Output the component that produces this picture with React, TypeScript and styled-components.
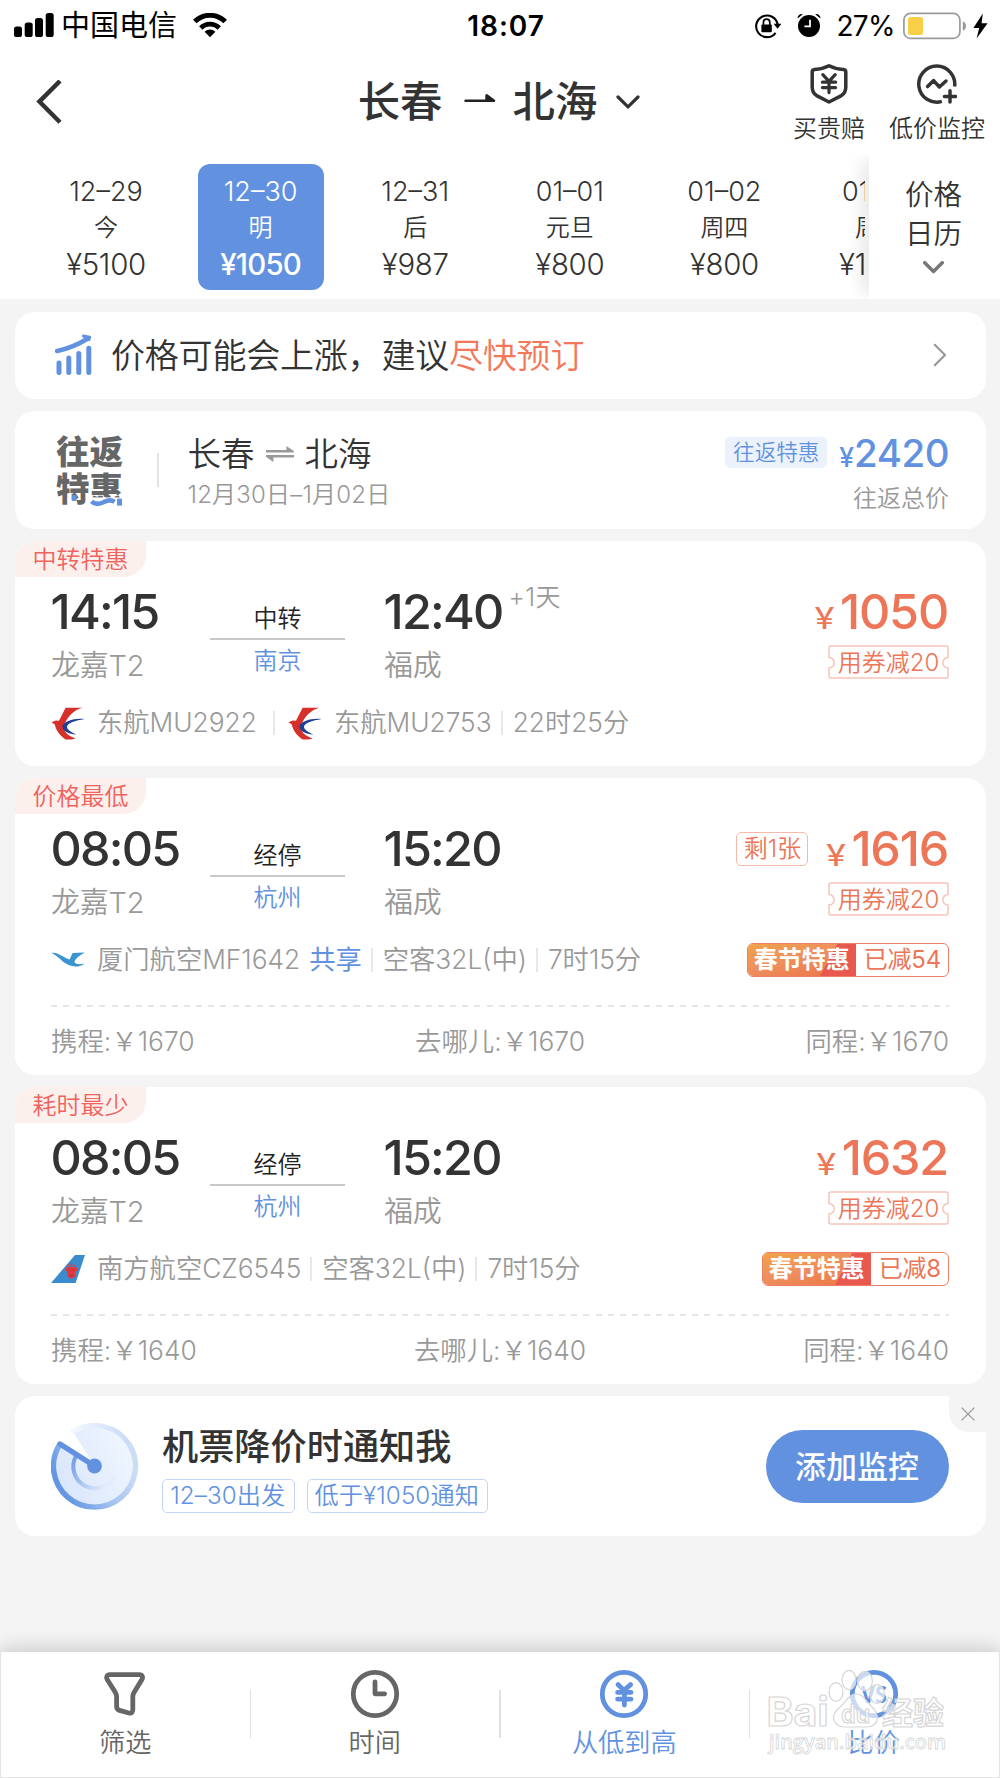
import React from 'react';
import styled, { createGlobalStyle, css } from 'styled-components';

const BLUE = '#6292df';
const ORANGE = '#ec7657';
const INK = '#333';
const GRAY = '#999';
const PAGE = '#f4f4f4';

const GlobalStyle = createGlobalStyle`
  * { box-sizing: border-box; }
  body {
    margin: 0;
    background: ${PAGE};
    font-family: Inter, "Noto Sans CJK SC", sans-serif;
    font-weight: 350;
    color: ${INK};
  }
  svg { display: block; flex: none; }
`;

const Screen = styled.div`
  width: 1000px;
  height: 1778px;
  display: flex;
  flex-direction: column;
  overflow: hidden;
  background: ${PAGE};
  white-space: nowrap;
`;

/* ---------- header ---------- */

const Header = styled.header`
  height: 299px;
  background: #fff;
  display: flex;
  flex-direction: column;
`;

const StatusBar = styled.div`
  height: 50px;
  padding: 0 12px 0 14px;
  display: grid;
  grid-template-columns: 1fr auto 1fr;
  align-items: center;
  color: #000;
`;

const StatusSide = styled.div<{ $end?: boolean }>`
  display: flex;
  align-items: center;
  justify-content: ${p => (p.$end ? 'flex-end' : 'flex-start')};
`;

const Carrier = styled.span`
  margin: 0 16px 0 7px;
  font-size: 29px;
  line-height: 50px;
  padding-top: 1px;
  font-weight: 400;
`;

const Clock = styled.span`
  font-size: 28px;
  font-weight: 600;
  line-height: 50px;
  letter-spacing: 1px;
  margin-left: 10px;
`;

const Percent = styled.span`
  font-size: 28px;
  font-weight: 400;
  line-height: 50px;
  letter-spacing: -0.6px;
  margin: 0 8px 0 15px;
`;

const NavBar = styled.div`
  height: 105px;
  display: grid;
  grid-template-columns: 1fr auto 1fr;
  align-items: center;
  padding: 0 15px 0 36px;
`;

const Route = styled.h1`
  margin: 0;
  display: flex;
  align-items: center;
  font-size: 42.4px;
  line-height: 60px;
  font-weight: 500;
  padding: 0 23px 1px 0;
`;

const RouteArrow = styled.svg`
  margin: 0 17px 6px 21px;
`;

const NavActions = styled.div`
  display: flex;
  justify-content: flex-end;
  gap: 24px;
  padding-top: 4px;
`;

const NavAction = styled.div`
  display: flex;
  flex-direction: column;
  align-items: center;
  gap: 8px;
  font-size: 24px;
  line-height: 34px;
`;

const DateStrip = styled.div`
  height: 144px;
  display: flex;
`;

const DateList = styled.div`
  width: 865px;
  display: flex;
  overflow: hidden;
  padding: 9px 0 0 43px;
  gap: 28.6px;
`;

const DateDay = styled.span`
  font-size: 27px;
  line-height: 35px;
`;

const DateName = styled.span`
  font-size: 24px;
  line-height: 38px;
`;

const DatePrice = styled.span`
  font-size: 29.4px;
  line-height: 36px;
  letter-spacing: -0.3px;
`;

const DateCell = styled.div<{ $active?: boolean }>`
  flex: none;
  width: 126px;
  height: 126px;
  padding-top: 10px;
  border-radius: 12px;
  display: flex;
  flex-direction: column;
  align-items: center;
  ${p => p.$active && css`
    background: ${BLUE};
    color: #fff;
    ${DatePrice} { font-weight: 450; letter-spacing: -0.8px; }
  `}
`;

const CalendarButton = styled.div`
  flex: 1;
  margin-left: 4px;
  padding: 21px 2px 0 0;
  display: flex;
  flex-direction: column;
  align-items: center;
  font-size: 28.5px;
  line-height: 38.5px;
  background: #fff;
  box-shadow: -14px 0 16px -6px rgba(0, 0, 0, 0.09);
  clip-path: inset(0 0 0 -30px);
  svg { margin-top: 8px; }
`;

/* ---------- cards ---------- */

const Cards = styled.main`
  flex: 1;
  padding: 13px 14px 0 15px;
  display: flex;
  flex-direction: column;
  gap: 12px;
`;

const Card = styled.section<{ $h: number }>`
  flex: none;
  height: ${p => p.$h}px;
  background: #fff;
  border-radius: 20px;
  overflow: hidden;
`;

const Notice = styled(Card)`
  display: flex;
  align-items: center;
  padding: 0 39px 1px 40px;
`;

const NoticeText = styled.p`
  flex: 1;
  margin: 0 0 0 19px;
  font-size: 34px;
  line-height: 50px;
  letter-spacing: -0.2px;
  padding-top: 1px;
  em { font-style: normal; color: #f37758; }
`;

const RoundTrip = styled(Card)`
  display: flex;
  align-items: center;
  padding: 0 37px 0 41px;
`;

const RoundTripLogo = styled.div`
  position: relative;
  width: 68px;
  height: 76px;
  padding-top: 2px;
  font-size: 33.5px;
  line-height: 37px;
  font-weight: 900;
  color: #666;
  white-space: normal;
  svg { position: absolute; left: 0; bottom: 0; }
`;

const ThinRule = styled.i`
  width: 1.5px;
  height: 34px;
  margin: 0 29px 0 33px;
  background: #e3e3e3;
`;

const RoundTripInfo = styled.div`
  flex: 1;
  display: flex;
  flex-direction: column;
  padding-top: 4px;
`;

const RoundTripRoute = styled.div`
  display: flex;
  align-items: center;
  font-size: 33.5px;
  line-height: 46px;
  gap: 10px;
`;

const RoundTripDate = styled.div`
  font-size: 24px;
  line-height: 36px;
  letter-spacing: 0.2px;
  color: ${GRAY};
`;

const RoundTripPrice = styled.div`
  display: flex;
  flex-direction: column;
  align-items: flex-end;
  padding-top: 10px;
`;

const TotalRow = styled.div`
  height: 46px;
  display: flex;
  align-items: center;
  color: ${BLUE};
`;

const SoftBadge = styled.span`
  width: 102px;
  height: 31px;
  margin-right: 12px;
  border-radius: 5px;
  background: #ecf2fc;
  text-align: center;
  font-size: 21.6px;
  line-height: 31px;
`;

const Total = styled.span`
  font-size: 38.5px;
  line-height: 46px;
  font-weight: 450;
  letter-spacing: -0.5px;
  small { font-size: 26.5px; line-height: 1; letter-spacing: 0; }
`;

const TotalNote = styled.span`
  font-size: 24px;
  line-height: 45px;
  color: ${GRAY};
`;

/* ---------- flight card ---------- */

const Ribbon = styled.div`
  width: 131px;
  height: 36px;
  border-radius: 20px 0 22px 0;
  background: #fcf0ed;
  color: #f0625d;
  text-align: center;
  font-size: 24px;
  line-height: 38px;
`;

const FlightBody = styled.div`
  padding: 0 37px 0 36px;
`;

const Legs = styled.div`
  display: flex;
  height: 112px;
  padding-top: 7px;
`;

const Endpoint = styled.div<{ $w: number }>`
  width: ${p => p.$w}px;
  flex: none;
`;

const TimeLine = styled.div`
  display: flex;
  height: 55px;
`;

const Time = styled.span`
  font-size: 48.5px;
  line-height: 56px;
  font-weight: 480;
  letter-spacing: -1.75px;
  margin-left: -0.5px;
`;

const NextDay = styled.span`
  font-size: 25px;
  line-height: 27px;
  letter-spacing: 0.3px;
  margin-left: 6px;
  color: ${GRAY};
`;

const Airport = styled.div`
  font-size: 29px;
  line-height: 54px;
  letter-spacing: -0.2px;
  color: ${GRAY};
`;

const Stop = styled.div`
  flex: none;
  width: 135px;
  margin-right: 39px;
  padding-top: 15px;
  text-align: center;
  font-size: 24px;
  color: #222;
`;

const StopKind = styled.div`
  line-height: 40px;
  height: 41px;
  border-bottom: 2px solid #c8c8c8;
`;

const StopCity = styled.div`
  line-height: 41px;
  color: ${BLUE};
`;

const Fare = styled.div`
  flex: 1;
  display: flex;
  flex-direction: column;
  align-items: flex-end;
  color: ${ORANGE};
`;

const FareRow = styled.div`
  display: flex;
  align-items: center;
  height: 55px;
`;

const SeatsLeft = styled.span`
  width: 72px;
  height: 34px;
  margin-right: 13px;
  border: 1.5px solid #f6b9aa;
  border-radius: 5px;
  text-align: center;
  font-size: 24px;
  line-height: 31px;
`;

const Price = styled.span`
  font-size: 48.5px;
  line-height: 56px;
  font-weight: 480;
  letter-spacing: -1.2px;
  margin-right: 1px;
  small { font-size: 29px; line-height: 1; letter-spacing: 0; margin-right: 1px; }
`;

const Coupon = styled.div`
  position: relative;
  width: 121px;
  height: 34px;
  margin-top: 6px;
  text-align: center;
  font-size: 24px;
  line-height: 35px;
  svg { position: absolute; inset: 0; }
`;

const Info = styled.div`
  height: 54px;
  display: flex;
  align-items: center;
  justify-content: space-between;
  margin-top: 7px;
`;

const InfoLeft = styled.div`
  display: flex;
  align-items: center;
  font-size: 26.3px;
  line-height: 40px;
  color: ${GRAY};
`;

const Carriers = styled.span`
  display: flex;
  align-items: center;
  gap: 12px;
`;

const Shared = styled.span`
  margin-left: 9px;
  color: ${BLUE};
  font-weight: 400;
`;

const InfoRule = styled.i<{ $wide?: boolean }>`
  width: 2px;
  height: 24px;
  margin: ${p => (p.$wide ? '0 13px 0 16px' : '0 10px 0 9px')};
  background: #e8e8e8;
`;

const Promo = styled.div`
  display: flex;
  height: 34px;
  border: 1.5px solid #ec8069;
  border-radius: 6px;
  overflow: hidden;
  font-size: 24px;
  line-height: 32px;
`;

const PromoName = styled.span`
  width: 108px;
  text-align: center;
  font-weight: 700;
  color: #fff;
  background:
    linear-gradient(118deg, transparent 71%, #e9584f 71.5%),
    linear-gradient(165deg, #f1a347 0%, #ee8f5f 45%, #ed7140 100%);
`;

const PromoCut = styled.span`
  padding: 0 7px 0 8px;
  font-weight: 400;
  color: ${ORANGE};
  letter-spacing: -0.2px;
`;

const Dashes = styled.div`
  height: 2px;
  margin-top: 18px;
  background: repeating-linear-gradient(90deg, #e6e6e6 0 6px, transparent 6px 12.1px);
`;

const Compare = styled.div`
  display: flex;
  justify-content: space-between;
  font-size: 26.4px;
  line-height: 68px;
  color: ${GRAY};
`;

/* ---------- monitor card ---------- */

const Monitor = styled(Card)`
  position: relative;
  display: flex;
  align-items: center;
  padding: 0 37px 0 36px;
`;

const MonitorText = styled.div`
  flex: 1;
  margin-left: 23px;
`;

const MonitorTitle = styled.h2`
  margin: 0;
  font-size: 36.2px;
  line-height: 54px;
  font-weight: 500;
`;

const MonitorTags = styled.div`
  display: flex;
  gap: 12px;
  margin-top: 5px;
`;

const MonitorTag = styled.span<{ $w: number }>`
  width: ${p => p.$w}px;
  height: 34px;
  border: 1.5px solid #c3d6f5;
  border-radius: 5px;
  text-align: center;
  font-size: 24.2px;
  line-height: 32px;
  letter-spacing: 0.1px;
  padding-right: 1.5px;
  color: ${BLUE};
`;

const MonitorButton = styled.button`
  width: 183px;
  height: 73px;
  border: 0;
  padding: 0 1px 0 0;
  border-radius: 37px;
  background: ${BLUE};
  color: #fff;
  font: 500 31px/73px Inter, "Noto Sans CJK SC", sans-serif;
`;

const CloseCorner = styled.div`
  position: absolute;
  top: 0;
  right: 0;
  width: 37px;
  height: 36px;
  padding: 11px 0 0 12px;
  border-bottom-left-radius: 20px;
  background: ${PAGE};
`;

/* ---------- bottom bar ---------- */

const TabBar = styled.nav`
  position: relative;
  flex: none;
  height: 126px;
  display: flex;
  align-items: center;
  background: #fff;
  border: 1px solid #e4e4e4;
  border-top: 0;
  box-shadow: 0 -4px 18px rgba(0, 0, 0, 0.17);
`;

const Tab = styled.div<{ $on?: boolean }>`
  flex: 1;
  height: 100%;
  padding: 17px 1px 0 0;
  display: flex;
  flex-direction: column;
  align-items: center;
  gap: 4px;
  font-size: 26.2px;
  line-height: 40px;
  color: ${p => (p.$on ? BLUE : '#666')};
`;

const TabRule = styled.i`
  width: 1.5px;
  height: 48px;
  margin: 0 -0.75px 2px;
  background: #e0e0e0;
`;

const Watermark = styled.svg`
  position: absolute;
  left: 763px;
  top: 14px;
`;

/* ---------- drawings ---------- */

const Signal = () => (
  <svg width="40" height="25" viewBox="0 0 40 25">
    <rect x="0" y="13.5" width="8" height="10.5" rx="2.6" />
    <rect x="10.7" y="9.5" width="8" height="14.5" rx="2.6" />
    <rect x="21" y="5" width="8" height="19" rx="2.6" />
    <rect x="31.7" y="0" width="8" height="24" rx="2.6" />
  </svg>
);

const Wifi = () => (
  <svg width="34" height="25" viewBox="0 0 34 25" fill="none" stroke="#000">
    <path d="M1.8 8.6 A21.5 21.5 0 0 1 32.2 8.6" strokeWidth="5" />
    <path d="M7.8 15 A13 13 0 0 1 26.2 15" strokeWidth="4.8" />
    <path d="M17 24.2 L11.6 18.8 A7.7 7.7 0 0 1 22.4 18.8 Z" fill="#000" stroke="none" />
  </svg>
);

const RotationLock = () => (
  <svg width="28" height="26" viewBox="0 0 28 26">
    <path d="M21.6 19.8 A10.8 10.8 0 1 1 23.6 11.5" fill="none" stroke="#000" strokeWidth="2.1" />
    <path d="M19.6 10.8 H27.4 L23.6 15.8 Z" />
    <rect x="7.4" y="11.6" width="10.4" height="7.6" rx="1" />
    <path d="M9.4 12 V9.4 A3.2 3.2 0 0 1 15.8 9.4 V12" fill="none" stroke="#000" strokeWidth="1.7" />
  </svg>
);

const Alarm = () => (
  <svg width="24" height="25" viewBox="0 0 24 25">
    <circle cx="12" cy="13" r="11" />
    <path d="M0.6 5.4 A4 4 0 0 1 5.8 1.2 Z M23.4 5.4 A4 4 0 0 0 18.2 1.2 Z" />
    <path d="M13 6.8 V13.4 H7.4" fill="none" stroke="#fff" strokeWidth="1.8" />
  </svg>
);

const Battery = () => (
  <svg width="64" height="28" viewBox="0 0 64 28">
    <rect x="0.9" y="1.4" width="56" height="25" rx="6.5" fill="none" stroke="#9b9b9b" strokeWidth="1.7" />
    <rect x="5" y="5" width="15" height="18" rx="2.5" fill="#f8cf46" />
    <path d="M59.8 9.2 Q63 10.6 63 14 Q63 17.4 59.8 18.8 Z" fill="#9b9b9b" />
  </svg>
);

const BoltIcon = styled.svg`
  margin-left: 6px;
`;

const Bolt = () => (
  <BoltIcon width="15" height="26" viewBox="0 0 15 26">
    <path d="M9.8 0.5 L0.4 15 H6.2 L3.6 25.5 L14.6 10.2 H8.6 Z" />
  </BoltIcon>
);

const Back = () => (
  <svg width="26" height="46" viewBox="0 0 26 46" fill="none" stroke={INK} strokeWidth="4.4">
    <path d="M24 1 L3.4 21.6 L24 42.2" />
  </svg>
);

const Chevron = ({ w, color, sw, rotate }: { w: number; color: string; sw: number; rotate?: boolean }) => (
  <svg
    width={rotate ? 14 : w}
    height={rotate ? 24 : w * 0.6}
    viewBox={rotate ? '0 0 14 24' : '0 0 24 14.4'}
    fill="none"
    stroke={color}
    strokeWidth={sw}
    strokeLinecap="round"
    strokeLinejoin="round"
  >
    <path d={rotate ? 'M1.8 1.8 L12 12 L1.8 22.2' : 'M2 2 L12 12 L22 2'} />
  </svg>
);

const yenPath = 'M-6.2 -8.6 L0 -1.8 L6.2 -8.6 M-6.6 -1 H6.6 M-6.6 4.4 H6.6 M0 -1.8 V9.4';

const Shield = () => (
  <svg width="38" height="40" viewBox="0 0 38 40" fill="none" stroke={INK} strokeLinejoin="round" strokeLinecap="round">
    <path
      d="M19 1.8 C24 4.4 29 5.2 33.4 5.4 Q35.8 5.6 35.8 8 V23 C35.8 27 34.6 29.6 31.4 31.6 L19 38 L6.6 31.6 C3.4 29.6 2.2 27 2.2 23 V8 Q2.2 5.6 4.6 5.4 C9 5.2 14 4.4 19 1.8 Z"
      strokeWidth="3.5"
    />
    <path d={yenPath} transform="translate(19 19.2)" strokeWidth="3.2" />
  </svg>
);

const WatchPrice = () => (
  <svg width="40" height="40" viewBox="0 0 40 40" fill="none" stroke={INK} strokeWidth="3.5" strokeLinecap="round" strokeLinejoin="round">
    <path d="M37.6 22.6 A18 18 0 1 0 24.8 37.4" strokeLinecap="butt" />
    <path d="M10.6 22.6 L16.6 16.6 L22.4 23 L29 17" />
    <path d="M33 26.8 V38 M27.4 32.4 H38.6" />
  </svg>
);

const Rising = () => (
  <svg width="37" height="42" viewBox="0 0 37 42" fill="none" stroke={BLUE} strokeWidth="5" strokeLinecap="round">
    <path d="M4 29 V38.4 M13.8 24 V38.4 M23.8 19.4 V38.4 M33.8 14.2 V38.4" />
    <path d="M2.2 17 C14 14.4 24 10 32 5" strokeWidth="4.6" />
    <path d="M28.4 2 L34.6 3.2 L34 5.6 Z" fill={BLUE} strokeWidth="3" strokeLinejoin="round" />
  </svg>
);

const Swap = () => (
  <svg width="30" height="18" viewBox="0 0 30 18" fill={GRAY}>
    <path d="M1 5 H21.4 V1 L28.8 6 V7.6 H1 Z" />
    <path d="M29 12.6 H8.4 V17 L1 11.8 V10 H29 Z" />
  </svg>
);

const LogoWave = () => (
  <svg width="68" height="15" viewBox="0 0 68 15">
    <rect x="15.5" y="2" width="5" height="6" rx="1.5" fill={BLUE} />
    <rect x="34" y="4.4" width="34" height="10.6" fill="#fff" />
    <path d="M35.5 8.4 C39.5 12.4 44 11 48 9 C51.6 7.2 55 6.4 58.6 8.8" fill="none" stroke={BLUE} strokeWidth="4.6" />
    <rect x="61" y="5.6" width="5" height="7" fill={BLUE} />
  </svg>
);

const ChinaEastern = () => (
  <svg width="34" height="33" viewBox="0 0 34 33">
    <path
      d="M14.6 0.8 H31.4 C23 3 17.4 9 14.4 15.6 C11 20 12.6 28 24.6 31.4 L20.6 32.4 H14.6 C8 28.6 5 22.6 3.8 17.6 L0.4 15.2 L5 13.6 L8 13.8 Z"
      fill="#d6302b"
    />
    <path
      d="M33.6 12 C23.6 10.6 12.4 14.6 11.4 19.2 C11.4 24 17.6 27.2 25.4 27.4 C19.2 25 15.8 22.4 16 19.6 C16.8 16 24 13.6 33.6 12 Z"
      fill="#1f3f97"
    />
  </svg>
);

const XiamenAir = () => (
  <svg width="34" height="34" viewBox="0 0 34 34">
    <path
      d="M0.4 10 C6.6 8.6 12 14.6 18.6 16.6 L21.6 10 L33.6 9.6 C28.6 12.6 24.4 15.6 23.4 19 C25 21.4 28.6 21.8 33.4 20.4 C28.8 24.6 21.4 24.4 15.4 20.8 C9.6 17.4 5.4 11.6 0.4 10 Z"
      fill="#3d94d3"
    />
  </svg>
);

const ChinaSouthern = () => (
  <svg width="34" height="30" viewBox="0 0 34 30">
    <path d="M24 1 H34 L24.6 29 H0 Z" fill="#3b8bcf" />
    <path d="M14.2 14.6 Q15 12.6 17.4 13.2 L20.4 12.4 L23.4 13.2 Q25.8 12.6 26.6 14.6 Q26.8 17.4 24.4 17.6 V21 Q23.8 24.4 20.4 24.4 Q17 24.4 16.4 21 V17.6 Q14 17.4 14.2 14.6 Z" fill="#e0383c" />
    <path d="M17.4 12.2 V10.8 M20.4 11.4 V9.4 M23.4 12.2 V10.8" stroke="#e0383c" strokeWidth="1.8" />
    <path d="M18.2 15.4 L19.4 16.8 M22.6 15.4 L21.4 16.8 M18.4 21.6 H22.4" stroke="#b42c3c" strokeWidth="1" />
  </svg>
);

const TicketEdge = () => (
  <svg width="121" height="34" viewBox="0 0 121 34" fill="none" stroke="#f7c4b8" strokeWidth="1.5">
    <path d="M3 1 H118 Q120 1 120 3 V12.6 A5.2 5.2 0 0 0 120 23 V31 Q120 33 118 33 H3 Q1 33 1 31 V23 A5.2 5.2 0 0 0 1 12.6 V3 Q1 1 3 1 Z" />
  </svg>
);

const Radar = () => (
  <svg width="88" height="88" viewBox="0 0 88 88" fill="none">
    <defs>
      <linearGradient id="sweep" x1="0" y1="0.5" x2="1" y2="0">
        <stop offset="0" stopColor="#dae7fb" />
        <stop offset="0.75" stopColor="#edf4fe" />
        <stop offset="1" stopColor="#f6f9ff" />
      </linearGradient>
      <linearGradient id="rim" x1="0" y1="0.45" x2="0.85" y2="0.1">
        <stop offset="0" stopColor="#6596e2" />
        <stop offset="0.5" stopColor="#a3c1f0" />
        <stop offset="1" stopColor="#cdddf6" />
      </linearGradient>
      <linearGradient id="rimTop" x1="0" y1="0" x2="1" y2="0">
        <stop offset="0" stopColor="#f3f8ff" />
        <stop offset="1" stopColor="#c9daf5" />
      </linearGradient>
      <linearGradient id="inner" x1="0" y1="0" x2="1" y2="0.5">
        <stop offset="0" stopColor="#6f9de5" />
        <stop offset="1" stopColor="#e4edfb" />
      </linearGradient>
    </defs>
    <path d="M43.5 44 L9 22 A41 41 0 1 0 22 9.5 Z" fill="url(#sweep)" />
    <path d="M22 9.5 A41 41 0 0 1 78 22" stroke="url(#rimTop)" strokeWidth="5" strokeLinecap="round" />
    <path d="M9 22 A41 41 0 1 0 78 22" stroke="url(#rim)" strokeWidth="5.4" />
    <path d="M25 34 A21 21 0 0 0 63.5 55" stroke="url(#inner)" strokeWidth="4" strokeLinecap="round" />
    <path d="M9 22 L43.5 44" stroke={BLUE} strokeWidth="5.4" strokeLinecap="round" />
    <circle cx="43.5" cy="44" r="7.4" fill={BLUE} />
  </svg>
);

const Close = () => (
  <svg width="14" height="14" viewBox="0 0 14 14" stroke="#999" strokeWidth="1.3">
    <path d="M0.6 0.6 L13.4 13.4 M13.4 0.6 L0.6 13.4" />
  </svg>
);

const Funnel = () => (
  <svg width="50" height="50" viewBox="0.6 0.4 50 50" fill="none" stroke="#666" strokeWidth="4.8" strokeLinejoin="round">
    <path d="M10.4 6 H40 C43 6 44 8.6 42.6 10.8 L34.6 24 C33.6 25.6 33.4 26.6 33.4 28.2 V41 C33.4 43.8 32 45 29.4 44.4 L20.2 41.8 C18 41 17.2 40 17.2 37.8 V28.2 C17.2 26.6 17 25.6 16 24 L7.8 10.8 C6.4 8.6 7.4 6 10.4 6 Z" />
  </svg>
);

const ClockFace = () => (
  <svg width="50" height="50" viewBox="0 0 50 50" fill="none" stroke="#666" strokeWidth="4.8" strokeLinecap="round" strokeLinejoin="round">
    <circle cx="25" cy="25" r="21.7" />
    <path d="M25 13 V24.8 H34.6" />
  </svg>
);

const YenCoin = () => (
  <svg width="50" height="50" viewBox="0 0 50 50" fill="none" stroke={BLUE} strokeLinecap="round">
    <circle cx="25" cy="25" r="21.7" strokeWidth="4.8" />
    <path d="M19 15.6 L25 21.4 L31.6 15.6 M18.6 23.4 H32 M18.6 30.2 H32 M25.4 22 V36" strokeWidth="4.8" />
  </svg>
);

const Versus = () => (
  <svg width="50" height="50" viewBox="0 0 50 50" fill="none" stroke={BLUE}>
    <circle cx="25" cy="25" r="21.7" strokeWidth="4.8" />
    <text x="12" y="34" textLength="26" lengthAdjust="spacingAndGlyphs" fontFamily="Open Sans, sans-serif" fontSize="24" fontWeight="700" fill={BLUE} stroke="none">
      VS
    </text>
  </svg>
);

const BaiduMark = () => (
  <Watermark width="190" height="100" viewBox="0 0 190 100" fill="rgba(255,255,255,0.65)" stroke="#d6d6d6" strokeWidth="1.2">
    <ellipse cx="72" cy="26" rx="7" ry="9.4" />
    <ellipse cx="85" cy="14" rx="7" ry="9.6" />
    <ellipse cx="101" cy="15" rx="7.4" ry="9.6" />
    <ellipse cx="113" cy="28" rx="7.4" ry="9.4" />
    <path d="M92 28 C99 28 101 34 107 40 C116 48 116 60 103 61 C96 61 88 61 82 61 C69 61 66 50 74 43 C82 37 84 28 92 28 Z" />
    <text x="2.5" y="60" fontFamily="Inter, sans-serif" fontSize="40" fontWeight="700" textLength="62" lengthAdjust="spacingAndGlyphs">Bai</text>
    <text x="77" y="57" fontFamily="Inter, sans-serif" fontSize="25" fontWeight="600" textLength="29" lengthAdjust="spacingAndGlyphs">du</text>
    <text x="118" y="58" fontFamily="Noto Sans CJK SC, sans-serif" fontSize="31" fontWeight="700">经验</text>
    <text x="5" y="83" fontFamily="Open Sans, sans-serif" fontSize="20" fontWeight="600" textLength="177" strokeWidth="0.8">jingyan.baidu.com</text>
  </Watermark>
);

/* ---------- data ---------- */

const dates = [
  { day: '12–29', name: '今', price: '¥5100' },
  { day: '12–30', name: '明', price: '¥1050', active: true },
  { day: '12–31', name: '后', price: '¥987' },
  { day: '01–01', name: '元旦', price: '¥800' },
  { day: '01–02', name: '周四', price: '¥800' },
  { day: '01–03', name: '周五', price: '¥1050' },
];

type Flight = {
  h: number;
  ribbon: string;
  from: string;
  to: string;
  nextDay?: boolean;
  stop: [string, string];
  seats?: string;
  price: string;
  carriers: { logo: React.ReactNode; name: string; shared?: boolean }[];
  details: string[];
  promo?: string;
  compare?: string;
};

const flights: Flight[] = [
  {
    h: 225,
    ribbon: '中转特惠',
    from: '14:15',
    to: '12:40',
    nextDay: true,
    stop: ['中转', '南京'],
    price: '1050',
    carriers: [
      { logo: <ChinaEastern />, name: '东航MU2922' },
      { logo: <ChinaEastern />, name: '东航MU2753' },
    ],
    details: ['22时25分'],
  },
  {
    h: 297,
    ribbon: '价格最低',
    from: '08:05',
    to: '15:20',
    stop: ['经停', '杭州'],
    seats: '剩1张',
    price: '1616',
    carriers: [{ logo: <XiamenAir />, name: '厦门航空MF1642', shared: true }],
    details: ['空客32L(中)', '7时15分'],
    promo: '已减54',
    compare: '1670',
  },
  {
    h: 297,
    ribbon: '耗时最少',
    from: '08:05',
    to: '15:20',
    stop: ['经停', '杭州'],
    price: '1632',
    carriers: [{ logo: <ChinaSouthern />, name: '南方航空CZ6545' }],
    details: ['空客32L(中)', '7时15分'],
    promo: '已减8',
    compare: '1640',
  },
];

const FlightCard = ({ f }: { f: Flight }) => (
  <Card $h={f.h}>
    <Ribbon>{f.ribbon}</Ribbon>
    <FlightBody>
      <Legs>
        <Endpoint $w={159}>
          <TimeLine><Time>{f.from}</Time></TimeLine>
          <Airport>龙嘉T2</Airport>
        </Endpoint>
        <Stop>
          <StopKind>{f.stop[0]}</StopKind>
          <StopCity>{f.stop[1]}</StopCity>
        </Stop>
        <Endpoint $w={200}>
          <TimeLine>
            <Time>{f.to}</Time>
            {f.nextDay && <NextDay>+1天</NextDay>}
          </TimeLine>
          <Airport>福成</Airport>
        </Endpoint>
        <Fare>
          <FareRow>
            {f.seats && <SeatsLeft>{f.seats}</SeatsLeft>}
            <Price><small>￥</small>{f.price}</Price>
          </FareRow>
          <Coupon><TicketEdge />用券减20</Coupon>
        </Fare>
      </Legs>
      <Info>
        <InfoLeft>
          {f.carriers.map((c, i) => (
            <React.Fragment key={c.name}>
              {i > 0 && <InfoRule $wide />}
              <Carriers>{c.logo}<span>{c.name}</span></Carriers>
              {c.shared && <Shared>共享</Shared>}
            </React.Fragment>
          ))}
          {f.details.map(d => (
            <React.Fragment key={d}>
              <InfoRule />
              <span>{d}</span>
            </React.Fragment>
          ))}
        </InfoLeft>
        {f.promo && (
          <Promo>
            <PromoName>春节特惠</PromoName>
            <PromoCut>{f.promo}</PromoCut>
          </Promo>
        )}
      </Info>
      {f.compare && (
        <>
          <Dashes />
          <Compare>
            <span>携程:￥{f.compare}</span>
            <span>去哪儿:￥{f.compare}</span>
            <span>同程:￥{f.compare}</span>
          </Compare>
        </>
      )}
    </FlightBody>
  </Card>
);

const Spacer = styled.span<{ $w: number }>`
  width: ${p => p.$w}px;
`;

export default function App() {
  return (
    <Screen>
      <GlobalStyle />
      <Header>
        <StatusBar>
          <StatusSide>
            <Signal />
            <Carrier>中国电信</Carrier>
            <Wifi />
          </StatusSide>
          <Clock>18:07</Clock>
          <StatusSide $end>
            <RotationLock />
            <Spacer $w={15} />
            <Alarm />
            <Percent>27%</Percent>
            <Battery />
            <Bolt />
          </StatusSide>
        </StatusBar>
        <NavBar>
          <Back />
          <Route>
            长春
            <RouteArrow width="32" height="10" viewBox="0 0 32 10">
              <path d="M1.6 6.8 H30 L22.6 1.4 V6.8" fill="#222" stroke="#222" strokeWidth="2.6" strokeLinecap="round" strokeLinejoin="round" />
            </RouteArrow>
            北海
            <Spacer $w={19} />
            <Chevron w={24} color={INK} sw={3.2} />
          </Route>
          <NavActions>
            <NavAction><Shield />买贵赔</NavAction>
            <NavAction><WatchPrice />低价监控</NavAction>
          </NavActions>
        </NavBar>
        <DateStrip>
          <DateList>
            {dates.map(d => (
              <DateCell key={d.day} $active={d.active}>
                <DateDay>{d.day}</DateDay>
                <DateName>{d.name}</DateName>
                <DatePrice>{d.price}</DatePrice>
              </DateCell>
            ))}
          </DateList>
          <CalendarButton>
            <span>价格</span>
            <span>日历</span>
            <Chevron w={21} color="#777" sw={4} />
          </CalendarButton>
        </DateStrip>
      </Header>

      <Cards>
        <Notice $h={87}>
          <Rising />
          <NoticeText>价格可能会上涨，建议<em>尽快预订</em></NoticeText>
          <Chevron w={14} color={GRAY} sw={2.2} rotate />
        </Notice>

        <RoundTrip $h={118}>
          <RoundTripLogo>往返特惠<LogoWave /></RoundTripLogo>
          <ThinRule />
          <RoundTripInfo>
            <RoundTripRoute><span>长春</span><Swap /><span>北海</span></RoundTripRoute>
            <RoundTripDate>12月30日–1月02日</RoundTripDate>
          </RoundTripInfo>
          <RoundTripPrice>
            <TotalRow>
              <SoftBadge>往返特惠</SoftBadge>
              <Total><small>¥</small>2420</Total>
            </TotalRow>
            <TotalNote>往返总价</TotalNote>
          </RoundTripPrice>
        </RoundTrip>

        {flights.map(f => <FlightCard key={f.ribbon} f={f} />)}

        <Monitor $h={140}>
          <Radar />
          <MonitorText>
            <MonitorTitle>机票降价时通知我</MonitorTitle>
            <MonitorTags>
              <MonitorTag $w={133}>12–30出发</MonitorTag>
              <MonitorTag $w={181}>低于¥1050通知</MonitorTag>
            </MonitorTags>
          </MonitorText>
          <MonitorButton>添加监控</MonitorButton>
          <CloseCorner><Close /></CloseCorner>
        </Monitor>
      </Cards>

      <TabBar>
        <Tab><Funnel />筛选</Tab>
        <TabRule />
        <Tab><ClockFace />时间</Tab>
        <TabRule />
        <Tab $on><YenCoin />从低到高</Tab>
        <TabRule />
        <Tab $on><Versus />比价</Tab>
        <BaiduMark />
      </TabBar>
    </Screen>
  );
}
